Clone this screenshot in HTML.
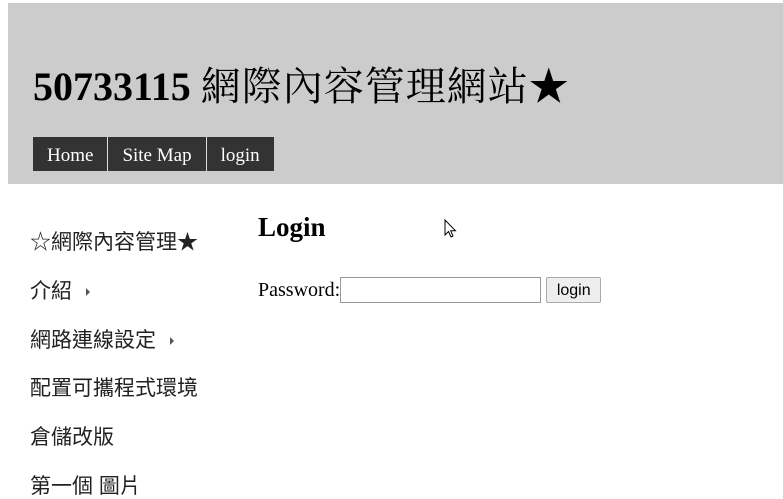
<!DOCTYPE html>
<html><head><meta charset="utf-8"><style>
body{margin:0;width:783px;height:493px;overflow:hidden;background:#fff;font-family:"Liberation Serif","Noto Serif CJK SC",serif;position:relative}
.hdr{position:absolute;left:8px;top:3px;width:775px;height:181px;background:#ccc}
.title{position:absolute;left:33px;top:62px;font-size:40px;line-height:50px;white-space:nowrap}
.title b{font-weight:bold}
.title span{letter-spacing:1px}
.nav{position:absolute;left:33px;top:137px;height:34px;display:flex}
.nav div{background:#333;color:#fff;font-size:19px;line-height:38px;height:34px;padding:0 14px;border-right:1px solid #ddd}
.nav div:last-child{border-right:none}
.side{position:absolute;left:30px;font-size:21px;color:#222;font-family:"Liberation Sans","Noto Sans CJK TC",sans-serif;white-space:nowrap;line-height:24px}
.tri{display:inline-block;width:0;height:0;border-left:4px solid #555;border-top:4px solid transparent;border-bottom:4px solid transparent;margin-left:14px;vertical-align:middle}
h2{position:absolute;left:258px;top:210px;margin:0;font-size:27px;line-height:34px}
.pw{position:absolute;left:258px;top:277px;font-size:20px;line-height:26px;display:flex;align-items:center}
.inp{width:199px;height:24px;border:1px solid #999;background:#fff}
.btn{margin-left:5px;width:53px;height:24px;border:1px solid #aaa;background:#eee;border-radius:2px;font-family:"Liberation Sans",sans-serif;font-size:16px;text-align:center;line-height:26px}
</style></head><body>
<div class="hdr"></div>
<div class="title"><b>50733115</b> <span>網際內容管理網站</span>★</div>
<div class="nav"><div>Home</div><div>Site Map</div><div>login</div></div>
<div class="side" style="top:231px">☆網際內容管理★</div>
<div class="side" style="top:280px">介紹<span class="tri"></span></div>
<div class="side" style="top:329px">網路連線設定<span class="tri"></span></div>
<div class="side" style="top:377px">配置可攜程式環境</div>
<div class="side" style="top:426px">倉儲改版</div>
<div class="side" style="top:475px">第一個 圖片</div>
<h2>Login</h2>
<div class="pw">Password:<div class="inp"></div><div class="btn">login</div></div>
<svg style="position:absolute;left:444px;top:219px" width="14" height="20" viewBox="0 0 14 20"><path d="M1 1 L1 16 L4.5 12.5 L7 18 L9 17 L6.7 11.8 L11.5 11.8 Z" fill="#fff" stroke="#000" stroke-width="1"/></svg>
</body></html>
